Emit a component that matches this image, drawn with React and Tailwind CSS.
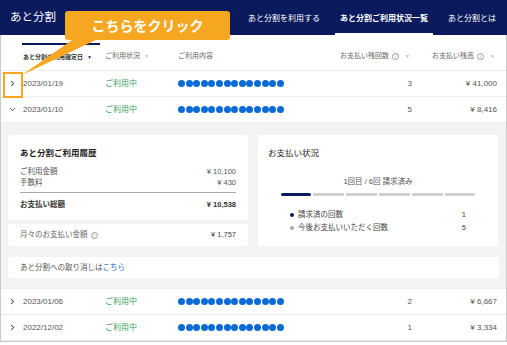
import React from 'react'
import { ChevronRight, ChevronDown } from 'lucide-react'

const ROWS_TOP = [
  { date: '2023/01/19', count: '3', amount: '¥ 41,000', open: false },
  { date: '2023/01/10', count: '5', amount: '¥ 8,416', open: true },
]
const ROWS_BOTTOM = [
  { date: '2023/01/06', count: '2', amount: '¥ 6,667', open: false },
  { date: '2022/12/02', count: '1', amount: '¥ 3,334', open: false },
]

function Info() {
  return (
    <span className="inline-flex items-center justify-center w-[7px] h-[7px] rounded-full border border-[#999] text-[5px] leading-none text-[#999] mx-[3px]">
      i
    </span>
  )
}

function Dots() {
  return (
    <div className="flex gap-[0.6px]">
      {Array.from({ length: 14 }).map((_, i) => (
        <div key={i} className="w-[7px] h-[7px] rounded-full bg-[#0b6ad3]" />
      ))}
    </div>
  )
}

function Row({ date, count, amount, open }) {
  return (
    <div className="flex h-[26px] items-center border-b border-[#ececec] text-[8px] text-[#555]">
      <div className="w-[22px] flex justify-center pl-[1px] text-[#444]">
        {open ? <ChevronDown size={9} strokeWidth={2.5} /> : <ChevronRight size={9} strokeWidth={2.8} />}
      </div>
      <div className="w-[82px]">{date}</div>
      <div className="w-[73px] text-[#3f9c5f]">ご利用中</div>
      <div className="w-[160px]">
        <Dots />
      </div>
      <div className="w-[74px] text-right">{count}</div>
      <div className="w-[85px] text-right">{amount}</div>
    </div>
  )
}

export default function App() {
  return (
    <div className="relative w-[507px] h-[345px] bg-white overflow-hidden font-['Liberation_Sans','Noto_Sans_CJK_JP',sans-serif]">
      {/* Top bar */}
      <div className="flex h-[35px] bg-[#0b1a5c] text-white">
        <div className="pl-[10px] flex items-center text-[11.5px]">あと分割</div>
        <nav className="ml-auto flex gap-[10px] pr-[6px] text-[8px]">
          <div className="px-[5px] flex items-center pt-[3px]">あと分割を利用する</div>
          <div className="px-[5px] flex items-center pt-[5px] font-bold border-b-2 border-white">あと分割ご利用状況一覧</div>
          <div className="px-[5px] flex items-center pt-[3px]">あと分割とは</div>
        </nav>
      </div>

      <div className="border-x border-b border-[#c9c9c9]">
        {/* Table header */}
        <div className="pt-[8px]">
          <div className="flex h-[28px] items-stretch border-b border-[#ececec] text-[7px] text-[#666]">
            <div className="w-[21px]" />
            <div className="w-[78px] border-t-2 border-[#0b1a5c] flex items-center pl-[1px] text-[6px] font-bold text-[#333]">
              あと分割の利用確定日<span className="ml-[4px] text-[5px]">▼</span>
            </div>
            <div className="w-[5px]" />
            <div className="w-[73px] flex items-center">
              ご利用状況<span className="ml-[4px] text-[5px] text-[#bbb]">▼</span>
            </div>
            <div className="w-[160px] flex items-center">ご利用内容</div>
            <div className="w-[74px] flex items-center justify-end pr-[2px]">
              お支払い残回数<Info /><span className="ml-[3px] text-[5px] text-[#bbb]">▼</span>
            </div>
            <div className="w-[85px] flex items-center justify-end pr-[2px]">
              お支払い残高<Info /><span className="ml-[3px] text-[5px] text-[#bbb]">▼</span>
            </div>
          </div>
        </div>

        {ROWS_TOP.map((r) => (
          <Row key={r.date} {...r} />
        ))}

        {/* Expanded detail */}
        <div className="bg-[#f2f3f5] px-[7px] pt-[12px] pb-[10px] border-b border-[#ececec]">
          <div className="flex gap-[10px]">
            <div className="w-[240px] flex flex-col gap-[4px]">
              <div className="bg-white rounded-[2px] px-[12px] pt-[13px] pb-[10px] text-[#555]">
                <div className="text-[8.5px] leading-[10px] font-bold text-[#222]">あと分割ご利用履歴</div>
                <div className="mt-[8px] text-[7.5px]">
                  <div className="flex justify-between leading-[11px]">
                    <span>ご利用金額</span>
                    <span>¥ 10,100</span>
                  </div>
                  <div className="flex justify-between leading-[11px]">
                    <span>手数料</span>
                    <span>¥ 430</span>
                  </div>
                </div>
                <div className="mt-[4px] border-t border-[#aaa]" />
                <div className="mt-[6px] flex justify-between leading-[11px] text-[7.5px] font-bold text-[#333]">
                  <span>お支払い総額</span>
                  <span>¥ 10,538</span>
                </div>
              </div>
              <div className="bg-white rounded-[2px] h-[22px] px-[12px] flex items-center justify-between text-[7.5px] text-[#666]">
                <span className="flex items-center">
                  月々のお支払い金額<Info />
                </span>
                <span className="text-[#444]">¥ 1,757</span>
              </div>
            </div>

            <div className="w-[240px] h-[111px] bg-white rounded-[2px] pt-[13px]">
              <div className="px-[10px] text-[8.5px] leading-[10px] text-[#222]">お支払い状況</div>
              <div className="mt-[19px] text-center text-[7.5px] leading-[10px] text-[#555]">1回目 / 6回 請求済み</div>
              <div className="mx-auto mt-[6px] w-[195px] flex gap-[2px]">
                <div className="flex-1 h-[3px] rounded-full bg-[#0b1a5c]" />
                <div className="flex-1 h-[3px] bg-[#d0d0d0]" />
                <div className="flex-1 h-[3px] bg-[#d0d0d0]" />
                <div className="flex-1 h-[3px] bg-[#d0d0d0]" />
                <div className="flex-1 h-[3px] bg-[#d0d0d0]" />
                <div className="flex-1 h-[3px] rounded-full bg-[#d0d0d0]" />
              </div>
              <div className="mt-[12px] px-[32px] text-[7.5px] text-[#444]">
                <div className="flex justify-between items-center leading-[13px]">
                  <span className="flex items-center gap-[4px]">
                    <span className="w-[4px] h-[4px] rounded-full bg-[#0b1a5c]" />
                    請求済の回数
                  </span>
                  <span>1</span>
                </div>
                <div className="flex justify-between items-center leading-[13px]">
                  <span className="flex items-center gap-[4px]">
                    <span className="w-[4px] h-[4px] rounded-full bg-[#aaa]" />
                    今後お支払いいただく回数
                  </span>
                  <span>5</span>
                </div>
              </div>
            </div>
          </div>

          <div className="mt-[11px] h-[21px] bg-white rounded-[2px] px-[12px] flex items-center text-[7.5px] text-[#555]">
            あと分割への取り消しは<span className="text-[#1f6fd1]">こちら</span>
          </div>
        </div>

        {ROWS_BOTTOM.map((r) => (
          <Row key={r.date} {...r} />
        ))}
      </div>

      {/* Callout overlay */}
      <svg className="absolute left-0 top-0 pointer-events-none" width="507" height="100">
        <polygon points="75,38 100,38 22,75" fill="#f6a721" />
      </svg>
      <div className="absolute left-[65px] top-[11px] w-[165px] h-[29px] rounded-[3px] bg-[#f6a721] flex items-center justify-center text-white text-[14px] font-bold font-['Noto_Sans_CJK_JP',sans-serif]">
        こちらをクリック
      </div>
      <div className="absolute left-[3px] top-[72px] w-[20px] h-[26px] border-2 border-[#f6a721]" />
    </div>
  )
}
